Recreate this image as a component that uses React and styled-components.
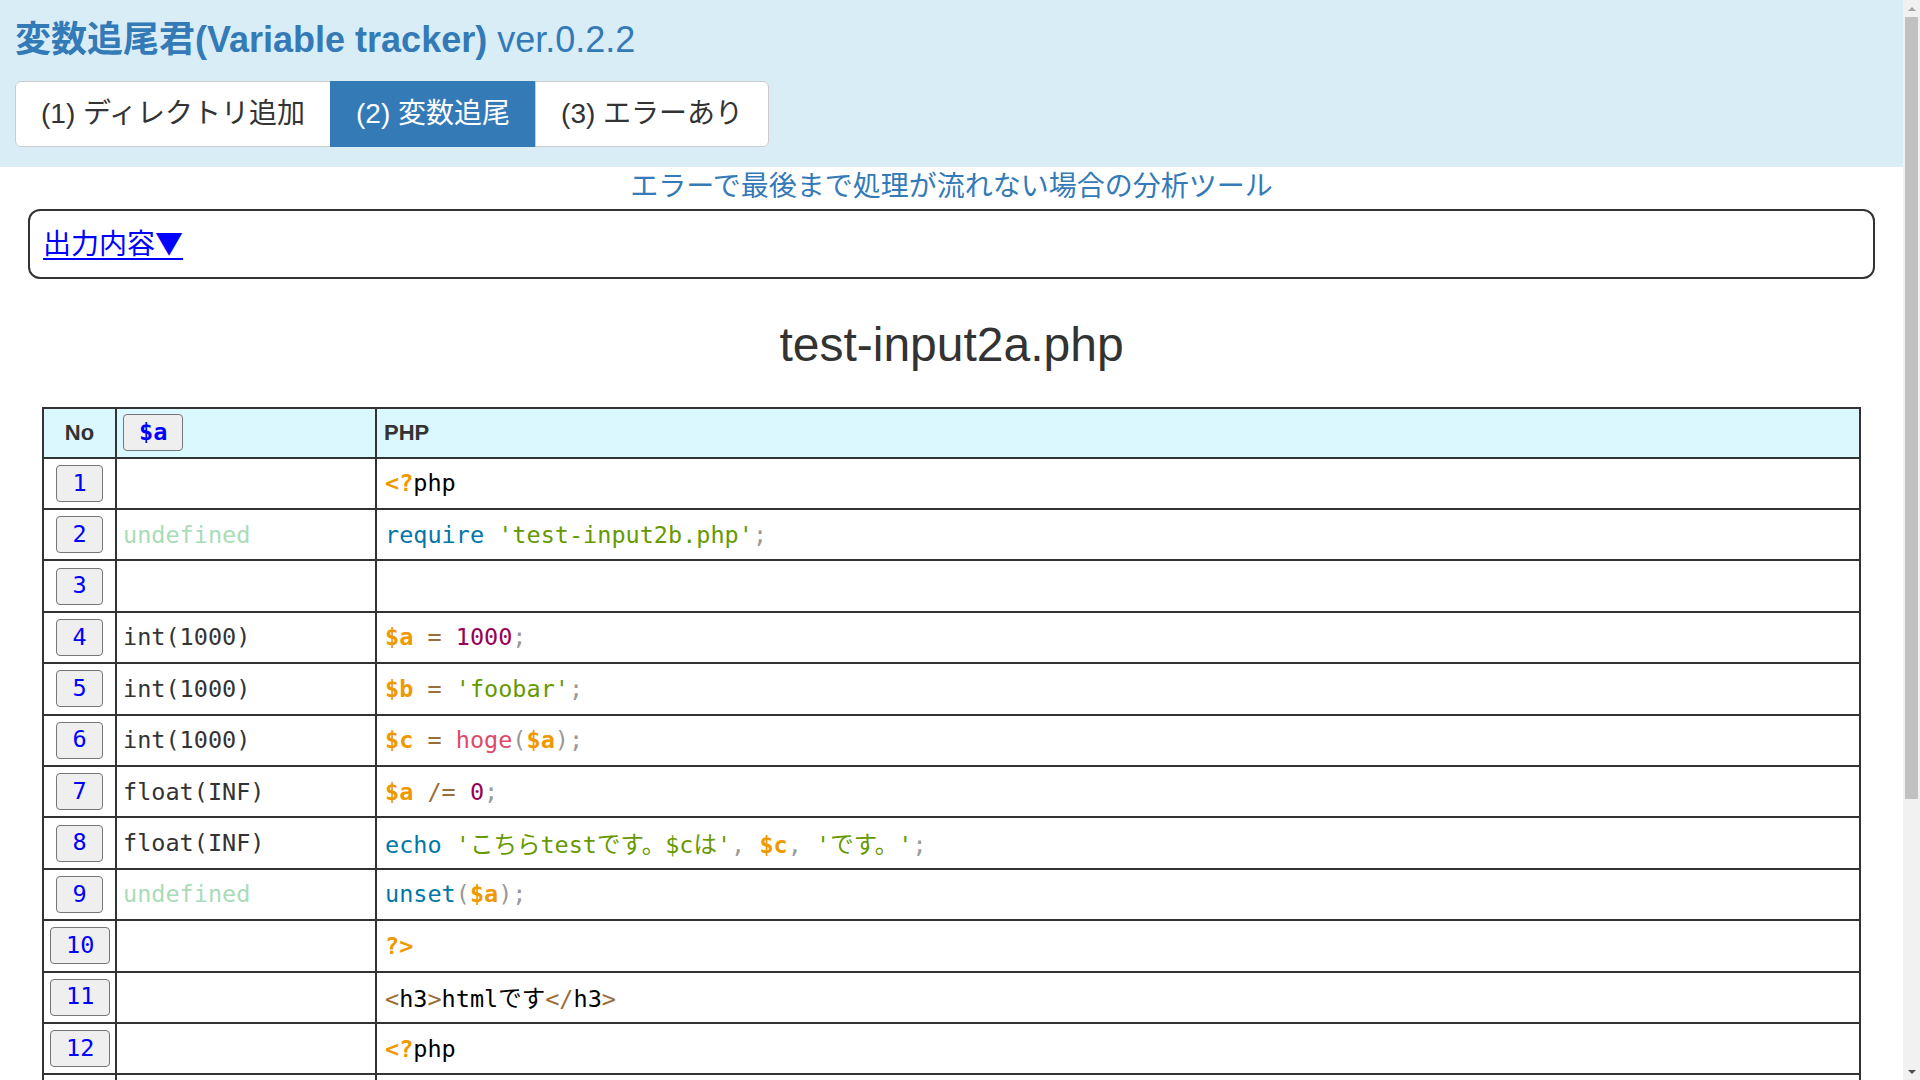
import React from 'react';
import styled, { createGlobalStyle } from 'styled-components';

const GlobalStyle = createGlobalStyle`
    body {
        margin: 0;
        background: #fff;
        color: #333;
        font-family: "Liberation Sans", "Noto Sans CJK JP", sans-serif;
    }
`;

const MONO = `"DejaVu Sans Mono", "Noto Sans CJK JP", monospace`;

const Page = styled.div`
    margin-right: 17px;
`;

/* Header */
const Header = styled.header`
    background: #d9edf7;
    padding: 20px 15px 20px;
`;

const Title = styled.h1`
    margin: 0 0 21px;
    font-size: 36px;
    line-height: 1.1;
    font-weight: bold;
    color: #337ab7;
    white-space: nowrap;
`;

const Version = styled.span`
    font-weight: normal;
`;

const TabGroup = styled.div`
    display: inline-flex;
`;

const Tab = styled.button`
    height: 66px;
    padding: 0 25px;
    font-family: inherit;
    font-size: 28px;
    line-height: 1;
    color: ${p => (p.$active ? '#fff' : '#333')};
    background: ${p => (p.$active ? '#337ab7' : '#fff')};
    border: 1px solid ${p => (p.$active ? '#337ab7' : '#ccc')};
    margin-left: -1px;
    cursor: pointer;

    &:first-child {
        margin-left: 0;
        border-radius: 6px 0 0 6px;
    }
    &:last-child {
        border-radius: 0 6px 6px 0;
    }
`;

/* Main */
const Main = styled.main`
    padding: 0 28px 40px;
`;

const Lead = styled.p`
    margin: 0 0 2px;
    text-align: center;
    font-size: 28px;
    line-height: 40px;
    color: #337ab7;
`;

const OutputBox = styled.div`
    box-sizing: border-box;
    height: 70px;
    border: 2px solid #333;
    border-radius: 12px;
    padding: 0 13px;
    display: flex;
    align-items: center;
`;

const Toggle = styled.a`
    font-size: 28px;
    line-height: 40px;
    color: #0000ff;
    text-decoration: underline;
    text-underline-offset: 4px;
    cursor: pointer;
`;

const Arrow = styled.span`
    font-family: "Noto Sans CJK JP", sans-serif;
`;

const FileName = styled.h2`
    margin: 40px 0 36px;
    text-align: center;
    font-size: 48px;
    line-height: 52px;
    font-weight: normal;
    color: #333;
`;

const TableWrap = styled.div`
    padding: 0 14px;
`;

const Table = styled.table`
    width: 100%;
    border-collapse: collapse;
    table-layout: fixed;
    border: 2px solid #333;
`;

const HeadRow = styled.tr`
    height: 50px;
    background: #dbf8ff;
`;

const Th = styled.th`
    border: 2px solid #333;
    padding: 0 ${p => p.$pad || 6}px;
    font-size: 22px;
    font-weight: bold;
    color: #333;
    text-align: ${p => p.$align || 'left'};
    vertical-align: middle;
`;

const Row = styled.tr`
    height: 51.4px;
`;

const Td = styled.td`
    border: 2px solid #333;
    padding: 0 ${p => p.$pad || 6}px;
    text-align: ${p => p.$align || 'left'};
    vertical-align: middle;
    font-family: ${MONO};
    font-size: 23.5px;
    white-space: pre;
    overflow: hidden;
`;

const LineButton = styled.button`
    height: 37px;
    padding: 0 15px;
    font-family: ${MONO};
    font-size: 23.5px;
    font-weight: ${p => (p.$bold ? 'bold' : 'normal')};
    line-height: 1;
    color: #0000ff;
    background: #efefef;
    border: 1px solid #767676;
    border-radius: 4px;
    cursor: pointer;
    vertical-align: middle;
`;

const Value = styled.span`
    color: ${p => (p.$undef ? '#a9dcb8' : '#333')};
`;

const tokenColors = {
    plain: '#000',
    delim: '#ee9900',
    kw: '#0077aa',
    str: '#669900',
    punc: '#999999',
    op: '#9a6e3a',
    num: '#990055',
    fn: '#dd4a68',
    vr: '#ee9900',
};

const Token = styled.span`
    color: ${p => tokenColors[p.$kind]};
    font-weight: ${p => (p.$kind === 'vr' || p.$kind === 'delim' ? 'bold' : 'normal')};
`;

/* Window scrollbar (classic, as in the screenshot) */
const Scrollbar = styled.div`
    position: fixed;
    top: 0;
    right: 0;
    width: 17px;
    height: 100vh;
    background: #f1f1f1;
    display: flex;
    flex-direction: column;
    align-items: center;
`;

const ScrollArrow = styled.div`
    height: 17px;
    display: flex;
    align-items: center;
    justify-content: center;
    &::before {
        content: '';
        border-left: 4px solid transparent;
        border-right: 4px solid transparent;
        ${p => (p.$down
            ? 'border-top: 4px solid #505050;'
            : 'border-bottom: 4px solid #a3a3a3;')}
    }
`;

const Thumb = styled.div`
    width: 13px;
    height: 782px;
    background: #c1c1c1;
`;

const Track = styled.div`
    flex: 1;
`;

const rows = [
    { no: 1, code: [['delim', '<?'], ['plain', 'php']] },
    { no: 2, val: 'undefined', code: [['kw', 'require'], ['plain', ' '], ['str', "'test-input2b.php'"], ['punc', ';']] },
    { no: 3, code: [] },
    { no: 4, val: 'int(1000)', code: [['vr', '$a'], ['plain', ' '], ['op', '='], ['plain', ' '], ['num', '1000'], ['punc', ';']] },
    { no: 5, val: 'int(1000)', code: [['vr', '$b'], ['plain', ' '], ['op', '='], ['plain', ' '], ['str', "'foobar'"], ['punc', ';']] },
    { no: 6, val: 'int(1000)', code: [['vr', '$c'], ['plain', ' '], ['op', '='], ['plain', ' '], ['fn', 'hoge'], ['punc', '('], ['vr', '$a'], ['punc', ')'], ['punc', ';']] },
    { no: 7, val: 'float(INF)', code: [['vr', '$a'], ['plain', ' '], ['op', '/='], ['plain', ' '], ['num', '0'], ['punc', ';']] },
    { no: 8, val: 'float(INF)', code: [['kw', 'echo'], ['plain', ' '], ['str', "'こちらtestです。$cは'"], ['punc', ','], ['plain', ' '], ['vr', '$c'], ['punc', ','], ['plain', ' '], ['str', "'です。'"], ['punc', ';']] },
    { no: 9, val: 'undefined', code: [['kw', 'unset'], ['punc', '('], ['vr', '$a'], ['punc', ')'], ['punc', ';']] },
    { no: 10, code: [['delim', '?>']] },
    { no: 11, code: [['op', '<'], ['plain', 'h3'], ['op', '>'], ['plain', 'htmlです'], ['op', '</'], ['plain', 'h3'], ['op', '>']] },
    { no: 12, code: [['delim', '<?'], ['plain', 'php']] },
    { no: 13, code: [['kw', 'echo'], ['plain', ' '], ['str', "'end'"], ['punc', ';']] },
    { no: 14, code: [['delim', '?>']] },
];

export default function App() {
    return (
        <>
            <GlobalStyle />
            <Page>
                <Header>
                    <Title>
                        変数追尾君(Variable tracker) <Version>ver.0.2.2</Version>
                    </Title>
                    <TabGroup>
                        <Tab>(1) ディレクトリ追加</Tab>
                        <Tab $active>(2) 変数追尾</Tab>
                        <Tab>(3) エラーあり</Tab>
                    </TabGroup>
                </Header>
                <Main>
                    <Lead>エラーで最後まで処理が流れない場合の分析ツール</Lead>
                    <OutputBox>
                        <Toggle>出力内容<Arrow>▼</Arrow></Toggle>
                    </OutputBox>
                    <FileName>test-input2a.php</FileName>
                    <TableWrap>
                        <Table>
                            <colgroup>
                                <col style={{ width: 73 }} />
                                <col style={{ width: 260 }} />
                                <col />
                            </colgroup>
                            <thead>
                                <HeadRow>
                                    <Th $align="center">No</Th>
                                    <Th>
                                        <LineButton $bold>$a</LineButton>
                                    </Th>
                                    <Th $pad={7}>PHP</Th>
                                </HeadRow>
                            </thead>
                            <tbody>
                                {rows.map(r => (
                                    <Row key={r.no}>
                                        <Td $align="center" $pad={0}>
                                            <LineButton>{r.no}</LineButton>
                                        </Td>
                                        <Td>
                                            {r.val && <Value $undef={r.val === 'undefined'}>{r.val}</Value>}
                                        </Td>
                                        <Td $pad={8}>
                                            {r.code.map(([kind, text], i) => (
                                                <Token key={i} $kind={kind}>{text}</Token>
                                            ))}
                                        </Td>
                                    </Row>
                                ))}
                            </tbody>
                        </Table>
                    </TableWrap>
                </Main>
            </Page>
            <Scrollbar>
                <ScrollArrow />
                <Thumb />
                <Track />
                <ScrollArrow $down />
            </Scrollbar>
        </>
    );
}
